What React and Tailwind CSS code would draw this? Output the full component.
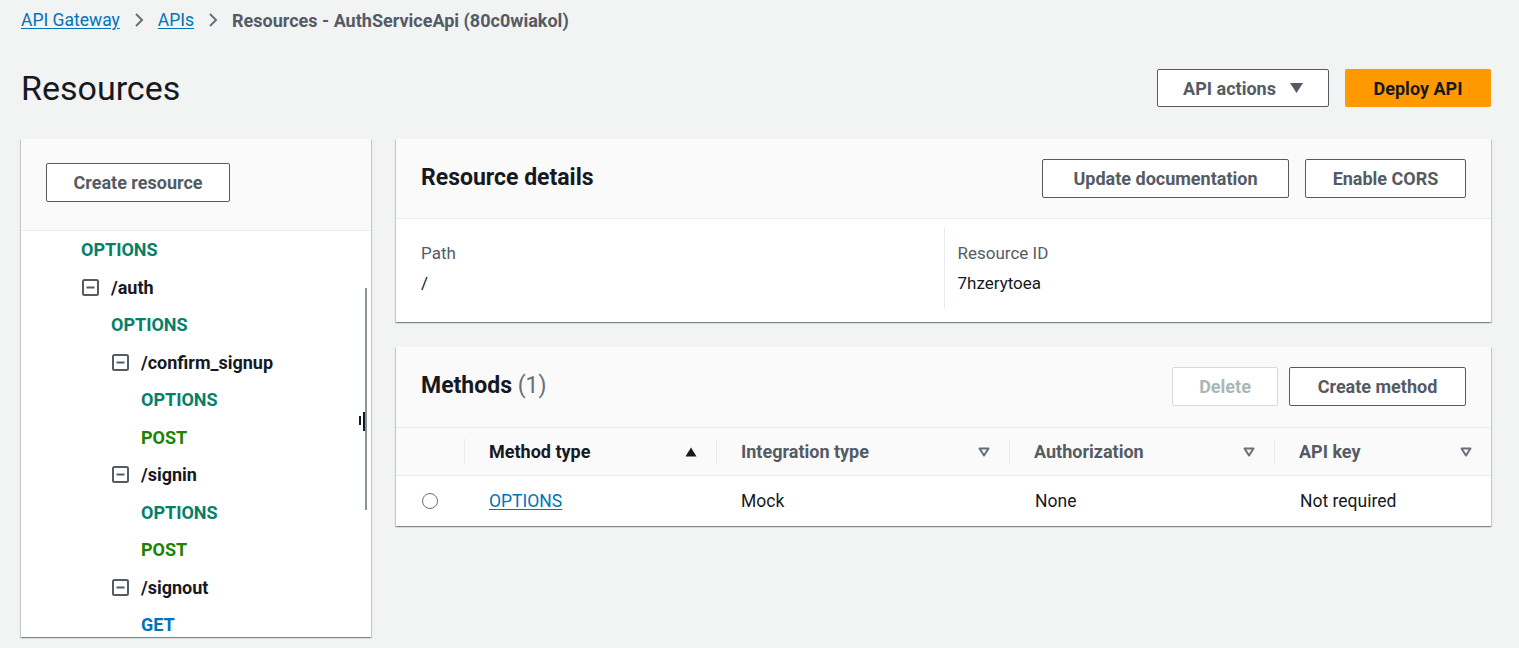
import React from 'react';

const font = { fontFamily: 'Roboto, "Open Sans", sans-serif' };

const Chevron = () => (
  <svg width="10" height="16" viewBox="0 0 10 16" className="mx-[14px]">
    <path d="M2 2 L8 8 L2 14" fill="none" stroke="#687078" strokeWidth="2" />
  </svg>
);

const SortDown = () => (
  <svg width="12" height="10" viewBox="0 0 12 10">
    <path d="M1.5 1.5 H10.5 L6 8.5 Z" fill="none" stroke="#687078" strokeWidth="2" strokeLinejoin="round" />
  </svg>
);

const SortUp = () => (
  <svg width="12" height="10" viewBox="0 0 12 10">
    <path d="M0.5 9.5 H11.5 L6 0.5 Z" fill="#16191f" />
  </svg>
);

const Collapse = () => (
  <svg width="17" height="17" viewBox="0 0 17 17" className="shrink-0">
    <rect x="1" y="1" width="15" height="15" rx="1.5" fill="none" stroke="#545b64" strokeWidth="2" />
    <path d="M4.5 8.5 H12.5" stroke="#545b64" strokeWidth="2" />
  </svg>
);

const methodColors = {
  OPTIONS: 'text-[#067f68]',
  POST: 'text-[#1d8102]',
  GET: 'text-[#0073bb]',
};

const tree = [
  { type: 'method', name: 'OPTIONS', indent: 60 },
  { type: 'resource', name: '/auth', indent: 61 },
  { type: 'method', name: 'OPTIONS', indent: 90 },
  { type: 'resource', name: '/confirm_signup', indent: 91 },
  { type: 'method', name: 'OPTIONS', indent: 120 },
  { type: 'method', name: 'POST', indent: 120 },
  { type: 'resource', name: '/signin', indent: 91 },
  { type: 'method', name: 'OPTIONS', indent: 120 },
  { type: 'method', name: 'POST', indent: 120 },
  { type: 'resource', name: '/signout', indent: 91 },
  { type: 'method', name: 'GET', indent: 120 },
];

const cardShadow = 'shadow-[0_1px_1px_0_rgba(0,28,36,0.3),1px_1px_1px_0_rgba(0,28,36,0.15),-1px_1px_1px_0_rgba(0,28,36,0.15)]';

// width passed as full class so tailwind picks it up
const Button = ({ children, disabled, w }) => (
  <button
    className={
      disabled
        ? `h-[39px] ${w} rounded-[2px] border border-[#d5dbdb] bg-white text-[#aab7b8] font-bold text-[18px]`
        : `h-[39px] ${w} rounded-[2px] border border-[#545b64] bg-white text-[#545b64] font-bold text-[18px]`
    }
  >
    {children}
  </button>
);

const columns = [
  { label: 'Method type', active: true },
  { label: 'Integration type' },
  { label: 'Authorization' },
  { label: 'API key' },
];

export default function App() {
  return (
    <div className="min-h-screen bg-[#f2f3f3] pl-[21px] pr-[28px] text-[#16191f]" style={font}>
      {/* breadcrumb */}
      <div className="flex items-center h-[40px] text-[17.5px]">
        <a className="text-[#0073bb] underline underline-offset-2">API Gateway</a>
        <Chevron />
        <a className="text-[#0073bb] underline underline-offset-2">APIs</a>
        <Chevron />
        <span className="font-bold text-[18px] text-[#545b64]">Resources - AuthServiceApi (80c0wiakol)</span>
      </div>

      {/* page header */}
      <div className="flex items-center justify-between mt-[29px] h-[38px]">
        <h1 className="text-[34px] leading-none">Resources</h1>
        <div className="flex gap-[16px]">
          <button className="h-[38px] w-[172px] flex items-center justify-center gap-[14px] rounded-[2px] border border-[#545b64] bg-white text-[#545b64] font-bold text-[18px]">
            API actions
            <svg width="13" height="10" viewBox="0 0 13 10">
              <path d="M0 0 H13 L6.5 10 Z" fill="#545b64" />
            </svg>
          </button>
          <button className="h-[38px] w-[146px] rounded-[2px] bg-[#ff9900] text-[#16191f] font-bold text-[18px]">
            Deploy API
          </button>
        </div>
      </div>

      <div className="grid grid-cols-[350px_1fr] gap-[25px] mt-[32px]">
        {/* resource tree */}
        <div className={`h-[498px] bg-white overflow-hidden relative ${cardShadow}`}>
          <div className="bg-[#fafafa] border-b border-[#eaeded] pt-[24px] pb-[28px] px-[25px]">
            <button className="h-[39px] w-[184px] rounded-[2px] border border-[#545b64] bg-white text-[#545b64] font-bold text-[18px]">
              Create resource
            </button>
          </div>
          <div>
            {tree.map((item, i) => (
              <div
                key={i}
                className="h-[37.5px] flex items-center font-bold text-[18px]"
                style={{ paddingLeft: item.indent }}
              >
                {item.type === 'resource' ? (
                  <>
                    <Collapse />
                    <span className="ml-[12px] text-[#16191f]">{item.name}</span>
                  </>
                ) : (
                  <span className={methodColors[item.name]}>{item.name}</span>
                )}
              </div>
            ))}
          </div>
          {/* scrollbar + resize handle */}
          <div className="absolute right-[4px] top-[149px] w-[2px] h-[222px] bg-[#879596]" />
          <div className="absolute right-[6px] top-[273px] w-[2px] h-[19px] bg-[#16191f]" />
          <div className="absolute right-[10px] top-[277px] w-[2px] h-[9px] bg-[#16191f]" />
        </div>

        <div className="flex flex-col gap-[25px]">
          {/* resource details */}
          <div className={`bg-white ${cardShadow}`}>
            <div className="bg-[#fafafa] border-b border-[#eaeded] flex items-center justify-between pl-[25px] pr-[25px] py-[20px]">
              <h2 className="text-[23px] font-bold">Resource details</h2>
              <div className="flex gap-[16px]">
                <Button w="w-[247px]">Update documentation</Button>
                <Button w="w-[161px]">Enable CORS</Button>
              </div>
            </div>
            <div className="grid grid-cols-2 px-[25px] pt-[8px] pb-[13px] text-[17px]">
              <div className="py-[14px]">
                <div className="leading-[24px] text-[#545b64]">Path</div>
                <div className="leading-[24px] mt-[6px]">/</div>
              </div>
              <div className="py-[14px] pl-[13px] border-l border-[#eaeded]">
                <div className="leading-[24px] text-[#545b64]">Resource ID</div>
                <div className="leading-[24px] mt-[6px]">7hzerytoea</div>
              </div>
            </div>
          </div>

          {/* methods */}
          <div className={`bg-white ${cardShadow}`}>
            <div className="bg-[#fafafa] border-b border-[#eaeded] flex items-center justify-between pl-[25px] pr-[25px] pt-[20px] pb-[21px]">
              <h2 className="text-[23px] font-bold">
                Methods <span className="font-normal text-[#687078]">(1)</span>
              </h2>
              <div className="flex gap-[11px]">
                <Button disabled w="w-[106px]">Delete</Button>
                <Button w="w-[177px]">Create method</Button>
              </div>
            </div>
            <div className="grid grid-cols-[68px_252px_293px_265px_1fr] bg-[#fafafa] border-b border-[#eaeded] h-[48px] items-center text-[18px] font-bold">
              <div />
              {columns.map((c) => (
                <div key={c.label} className="flex items-center justify-between h-[25px] border-l border-[#eaeded] pl-[24px] pr-[19px]">
                  <span className={c.active ? 'text-[#16191f]' : 'text-[#545b64]'}>{c.label}</span>
                  {c.active ? <SortUp /> : <SortDown />}
                </div>
              ))}
            </div>
            <div className="grid grid-cols-[68px_252px_293px_265px_1fr] h-[50px] items-center text-[17.5px]">
              <div className="pl-[26px]">
                <div className="w-[16px] h-[16px] rounded-full border-[1.5px] border-[#687078]" />
              </div>
              <div className="pl-[25px]">
                <a className="text-[#0073bb] underline underline-offset-2">OPTIONS</a>
              </div>
              <div className="pl-[25px]">Mock</div>
              <div className="pl-[26px]">None</div>
              <div className="pl-[26px]">Not required</div>
            </div>
          </div>
        </div>
      </div>
    </div>
  );
}
